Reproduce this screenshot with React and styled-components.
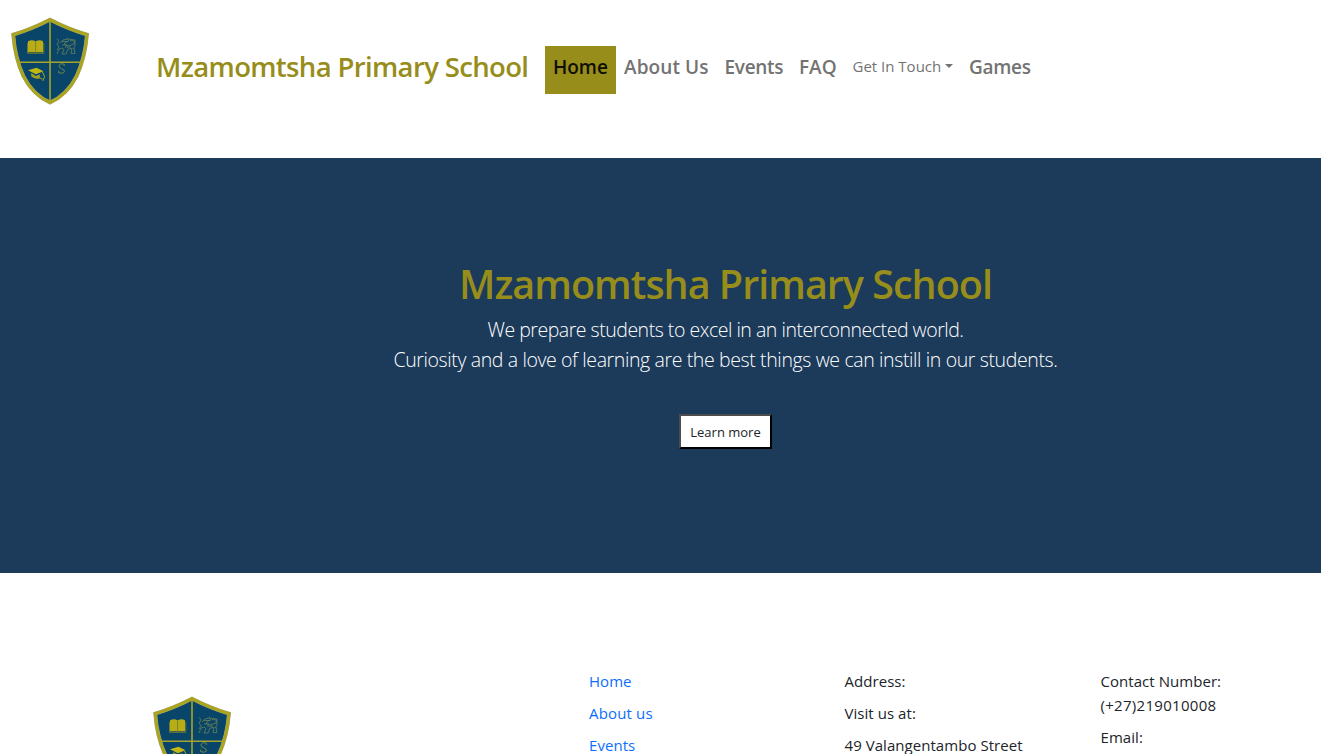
import React from "react";
import styled, { createGlobalStyle } from "styled-components";

const GlobalStyle = createGlobalStyle`
  *, *::before, *::after { box-sizing: border-box; }
  html, body { margin: 0; padding: 0; }
  body {
    height: 754px;
    overflow: hidden;
    background: #fff;
    color: #212529;
    font-family: "Open Sans", "Noto Sans", sans-serif;
    font-size: 15px;
    line-height: 24px;
  }
  h1, p, ul { margin: 0; padding: 0; }
`;

const Navbar = styled.nav`
  display: flex;
  align-items: flex-start;
  height: 158px;
`;

const Crest = styled.svg`
  display: block;
  flex: none;
  width: 100px;
  height: 120px;
`;

const Brand = styled.a`
  flex: none;
  width: 389px;
  margin-left: 56px;
  padding-top: 46px;
  color: #978d1a;
  font-size: 27.5px;
  font-weight: 600;
  line-height: 42px;
  letter-spacing: -0.64px;
  white-space: nowrap;
`;

const NavList = styled.ul`
  display: flex;
  margin-top: 46px;
  list-style: none;
`;

const NavItem = styled.li`
  display: flex;
  width: ${(p) => p.$width}px;
  height: 48px;
  padding: 6px 0 0 8px;
  background: ${(p) => (p.$active ? "#978d1a" : "transparent")};
  color: ${(p) => (p.$active ? "#0f0e03" : "#737373")};
  font-size: 19px;
  font-weight: 600;
  line-height: 30px;
  letter-spacing: ${(p) => p.$tracking || 0}px;
  white-space: nowrap;
`;

const DropdownItem = styled(NavItem)`
  align-items: flex-start;
  padding-top: 5px;
  font-size: 15px;
  font-weight: 400;
`;

const Caret = styled.span`
  width: 0;
  height: 0;
  margin: 13px 0 0 4px;
  border-top: 4.8px solid #737373;
  border-left: 4.5px solid transparent;
  border-right: 4.5px solid transparent;
`;

const Hero = styled.section`
  display: flex;
  flex-direction: column;
  align-items: center;
  height: 415px;
  padding: 102px 0 0 130px;
  background: #1c3a5a;
  color: #fff;
`;

const HeroTitle = styled.h1`
  color: #978d1a;
  font-size: 39.5px;
  font-weight: 600;
  line-height: 48px;
  letter-spacing: -1px;
  white-space: nowrap;
`;

const Lead = styled.p`
  font-size: 19.5px;
  font-weight: 300;
  line-height: 30px;
  letter-spacing: ${(p) => p.$tracking || 0}px;
  white-space: nowrap;
`;

const LeadGroup = styled.div`
  display: flex;
  flex-direction: column;
  align-items: center;
  margin-top: 7px;
`;

const LearnMore = styled.button`
  width: 93px;
  height: 35px;
  margin-top: 39px;
  padding: 1px 0 0;
  border: 2px solid;
  border-color: #4c4c4c #000 #000 #4c4c4c;
  background: #fff;
  color: #212529;
  font-family: inherit;
  font-size: 13px;
  line-height: 30px;
  white-space: nowrap;
`;

const Footer = styled.footer`
  display: grid;
  grid-template-columns: 447px 255.5px 256px 1fr;
  height: 181px;
  padding: 96px 0 0 142px;
  overflow: hidden;
`;

const FooterLogo = styled.div`
  margin-top: 10px;
`;

const Column = styled.div`
  display: flex;
  flex-direction: column;
  gap: 8px;
`;

const Line = styled.p`
  color: ${(p) => (p.$link ? "#0d6efd" : "#212529")};
  letter-spacing: ${(p) => p.$tracking || 0.05}px;
  white-space: nowrap;
`;

const PhoneNumber = styled.span`
  letter-spacing: 0.3px;
`;

function SchoolCrest() {
  return (
    <Crest viewBox="0 0 100 120" aria-label="School crest">
      <path
        d="M50 19.6 Q32 29 13.2 34.6 Q15 58 23.3 76 Q33 95 50 102.6 Q67 95 76.7 76 Q85 58 87 34.6 Q68 29 50 19.6Z"
        fill="#084568"
        stroke="#a3a38c"
        strokeWidth="3.8"
      />
      <path
        d="M50 19.6 Q32 29 13.2 34.6 Q15 58 23.3 76 Q33 95 50 102.6 Q67 95 76.7 76 Q85 58 87 34.6 Q68 29 50 19.6Z"
        fill="none"
        stroke="#aaa51c"
        strokeWidth="3"
      />
      <path d="M50 21V102M18 62.3H82" stroke="#a6a32d" strokeWidth="1.6" fill="none" />
      <path d="M28 41.2Q32.5 39.2 35.6 41.5Q39 39.2 43 41.2V52.3H28Z" fill="#b8ad17" />
      <path d="M27.5 43V53.3H43.8V43M35.6 41.5V53" stroke="#76802f" strokeWidth="0.9" fill="none" />
      <path d="M28 70.2L36.5 67.7L43.5 71.3L35.8 74.3Z" fill="#c2b713" />
      <path d="M31.2 73V76.3Q35 80 39.8 78.2V74.2L35.8 76Z" fill="#a5a122" />
      <path d="M42.5 72L44.6 76.5L42.8 81M39 77.5L42.5 79.2" stroke="#aaa329" strokeWidth="1" fill="none" />
      <g fill="none" stroke="#637e58" strokeWidth="0.85">
        <path d="M57 38.5L59 41L57 44L59 47L57 50M57 54L59 49L62 48L64 49.5L62 54H66L68 49L72 48.5L71 53.5H75L74 48" />
        <path d="M60 43L63 40L67 39L69 41L66 42L64 44L68 46L74 44L74.5 41L70 40.5M67 38.5L70 39.5L75 40V46L73 49M62 41.5H68M62 45H67M65 47H71" />
      </g>
      <path d="M64.2 66V64.2Q59.5 62.8 59 66.1Q59 68 61.8 68.8Q65 70 64.4 72Q63 74.2 58.7 72.7V70.6" stroke="#7e8b43" strokeWidth="0.9" fill="none" />
    </Crest>
  );
}

export default function App() {
  return (
    <>
      <GlobalStyle />
      <Navbar>
        <SchoolCrest />
        <Brand>Mzamomtsha Primary School</Brand>
        <NavList>
          <NavItem $active $width={71}>Home</NavItem>
          <NavItem $width={100.5} $tracking={0.1}>About Us</NavItem>
          <NavItem $width={74.5} $tracking={-0.3}>Events</NavItem>
          <NavItem $width={53.5}>FAQ</NavItem>
          <DropdownItem $width={116.5}>
            Get In Touch
            <Caret />
          </DropdownItem>
          <NavItem $width={78} $tracking={-0.3}>Games</NavItem>
        </NavList>
      </Navbar>
      <Hero>
        <HeroTitle>Mzamomtsha Primary School</HeroTitle>
        <LeadGroup>
          <Lead $tracking={-0.48}>We prepare students to excel in an interconnected world.</Lead>
          <Lead $tracking={-0.38}>Curiosity and a love of learning are the best things we can instill in our students.</Lead>
        </LeadGroup>
        <LearnMore>Learn more</LearnMore>
      </Hero>
      <Footer>
        <FooterLogo>
          <SchoolCrest />
        </FooterLogo>
        <Column>
          <Line $link>Home</Line>
          <Line $link $tracking={0.15}>About us</Line>
          <Line $link>Events</Line>
        </Column>
        <Column>
          <Line>Address:</Line>
          <Line>Visit us at:</Line>
          <Line>49 Valangentambo Street</Line>
        </Column>
        <Column>
          <Line>
            Contact Number:
            <br />
            <PhoneNumber>(+27)219010008</PhoneNumber>
          </Line>
          <Line>Email:</Line>
        </Column>
      </Footer>
    </>
  );
}
